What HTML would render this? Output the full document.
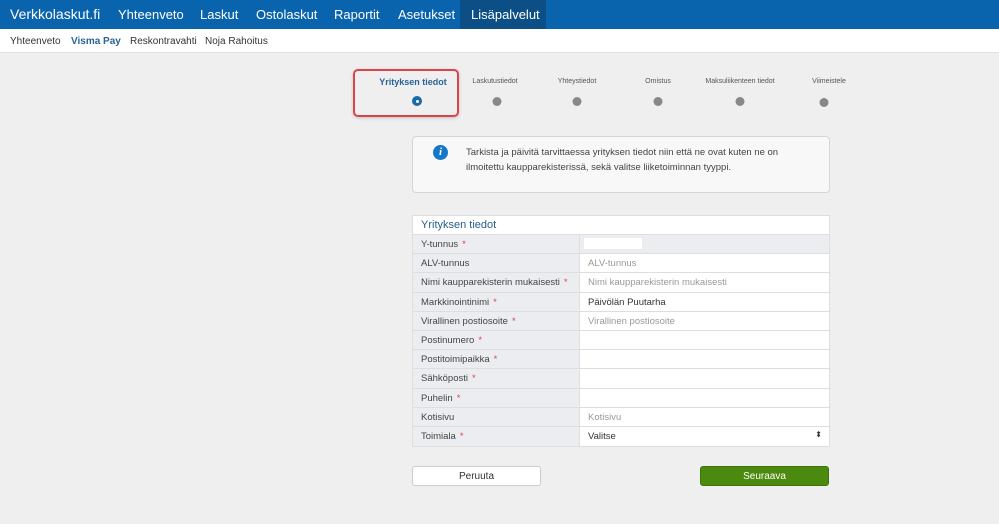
<!DOCTYPE html>
<html><head><meta charset="utf-8"><style>
*{box-sizing:border-box;margin:0;padding:0}
body{width:999px;height:524px;background:#efefef;font-family:"Liberation Sans",sans-serif;position:relative;overflow:hidden;color:#333}
.top{position:absolute;left:0;top:0;width:999px;height:29px;background:#0a64ad}
.top span{position:absolute;top:7px;color:#fff;font-size:13px}
.act{position:absolute;left:460px;top:0;width:86px;height:29px;background:#0b4f86}
.sub{position:absolute;left:0;top:29px;width:999px;height:24px;background:#fff;border-bottom:1px solid #e2e2e2}
.sub span{position:absolute;top:7px;font-size:10px;color:#333}
.step{position:absolute;top:78px;font-size:7px;color:#555;transform:translateX(-50%);white-space:nowrap}
.dot{position:absolute;top:97px;width:9px;height:9px;border-radius:50%;background:#888;transform:translateX(-50%)}
.red{position:absolute;left:353px;top:69px;width:106px;height:48px;border:2px solid #d9464a;border-radius:5px;box-shadow:0 1px 3px rgba(0,0,0,.2)}
.info{position:absolute;left:412px;top:136px;width:418px;height:57px;background:#f8f8f8;border:1px solid #d5d5d5;border-radius:4px}
.info .i{position:absolute;left:20px;top:8px;width:15px;height:15px;border-radius:50%;background:#1477c8;color:#fff;font-size:11px;font-weight:bold;font-style:italic;text-align:center;line-height:15px;font-family:"Liberation Serif",serif}
.info p{position:absolute;left:53px;top:8px;font-size:9.5px;line-height:15px;color:#444}
.tbl{position:absolute;left:412px;top:215px;width:418px;background:#fff;border:1px solid #dedede}
.th{height:19px;font-size:11px;color:#2a5d8c;padding:3px 0 0 8px;border-bottom:1px solid #dedede}
.row{height:19.2px;display:flex;border-bottom:1px solid #dedede;font-size:9.5px}
.row:last-child{border-bottom:none}
.l{width:167px;background:#ebedf0;border-right:1px solid #dedede;padding:4px 0 0 8px;color:#444}
.l b{color:#d9464a;font-weight:normal;margin-left:4px}
.v{flex:1;padding:4px 0 0 8px;color:#999;position:relative}
.v.k{color:#333}
.btn{position:absolute;top:466px;width:129px;height:20px;border-radius:3px;font-size:10px;text-align:center;line-height:19px}
</style></head><body>
<div class="top">
<div class="act"></div>
<span style="left:10px;font-size:14px;top:6px">Verkkolaskut.fi</span>
<span style="left:118px">Yhteenveto</span>
<span style="left:200px">Laskut</span>
<span style="left:256px">Ostolaskut</span>
<span style="left:334px">Raportit</span>
<span style="left:398px">Asetukset</span>
<span style="left:471px">Lisäpalvelut</span>
</div>
<div class="sub">
<span style="left:10px">Yhteenveto</span>
<span style="left:71px;color:#2a6496;font-weight:bold">Visma Pay</span>
<span style="left:130px">Reskontravahti</span>
<span style="left:205px">Noja Rahoitus</span>
</div>
<div class="red"></div>
<div class="step" style="left:413px;top:77px;font-size:9px;font-weight:bold;color:#2a6496">Yrityksen tiedot</div>
<div class="dot" style="left:417px;background:#1a6aa8;width:10px;height:10px;top:96px"><div style="position:absolute;left:3.5px;top:3.5px;width:3px;height:3px;border-radius:50%;background:#fff"></div></div>
<div class="step" style="left:495px">Laskutustiedot</div><div class="dot" style="left:497px"></div>
<div class="step" style="left:577px">Yhteystiedot</div><div class="dot" style="left:577px"></div>
<div class="step" style="left:658px">Omistus</div><div class="dot" style="left:658px"></div>
<div class="step" style="left:740px">Maksuliikenteen tiedot</div><div class="dot" style="left:740px"></div>
<div class="step" style="left:829px">Viimeistele</div><div class="dot" style="left:824px;top:98px"></div>
<div class="info"><div class="i">i</div><p>Tarkista ja päivitä tarvittaessa yrityksen tiedot niin että ne ovat kuten ne on<br>ilmoitettu kaupparekisterissä, sekä valitse liiketoiminnan tyyppi.</p></div>
<div class="tbl">
<div class="th">Yrityksen tiedot</div>
<div class="row"><div class="l">Y-tunnus<b>*</b></div><div class="v" style="background:#ebedf0"><div style="position:absolute;left:4px;top:3px;width:58px;height:11px;background:#fff"></div></div></div>
<div class="row"><div class="l">ALV-tunnus</div><div class="v">ALV-tunnus</div></div>
<div class="row"><div class="l">Nimi kaupparekisterin mukaisesti<b>*</b></div><div class="v">Nimi kaupparekisterin mukaisesti</div></div>
<div class="row"><div class="l">Markkinointinimi<b>*</b></div><div class="v k">Päivölän Puutarha</div></div>
<div class="row"><div class="l">Virallinen postiosoite<b>*</b></div><div class="v">Virallinen postiosoite</div></div>
<div class="row"><div class="l">Postinumero<b>*</b></div><div class="v"></div></div>
<div class="row"><div class="l">Postitoimipaikka<b>*</b></div><div class="v"></div></div>
<div class="row"><div class="l">Sähköposti<b>*</b></div><div class="v"></div></div>
<div class="row"><div class="l">Puhelin<b>*</b></div><div class="v"></div></div>
<div class="row"><div class="l">Kotisivu</div><div class="v">Kotisivu</div></div>
<div class="row"><div class="l">Toimiala<b>*</b></div><div class="v k">Valitse<span style="position:absolute;right:7px;top:3px;font-size:8px">⬍</span></div></div>
</div>
<div class="btn" style="left:412px;background:#fff;border:1px solid #ccc;color:#333">Peruuta</div>
<div class="btn" style="left:700px;background:#4b8a0f;color:#fff;border:1px solid #3d740a">Seuraava</div>
</body></html>
